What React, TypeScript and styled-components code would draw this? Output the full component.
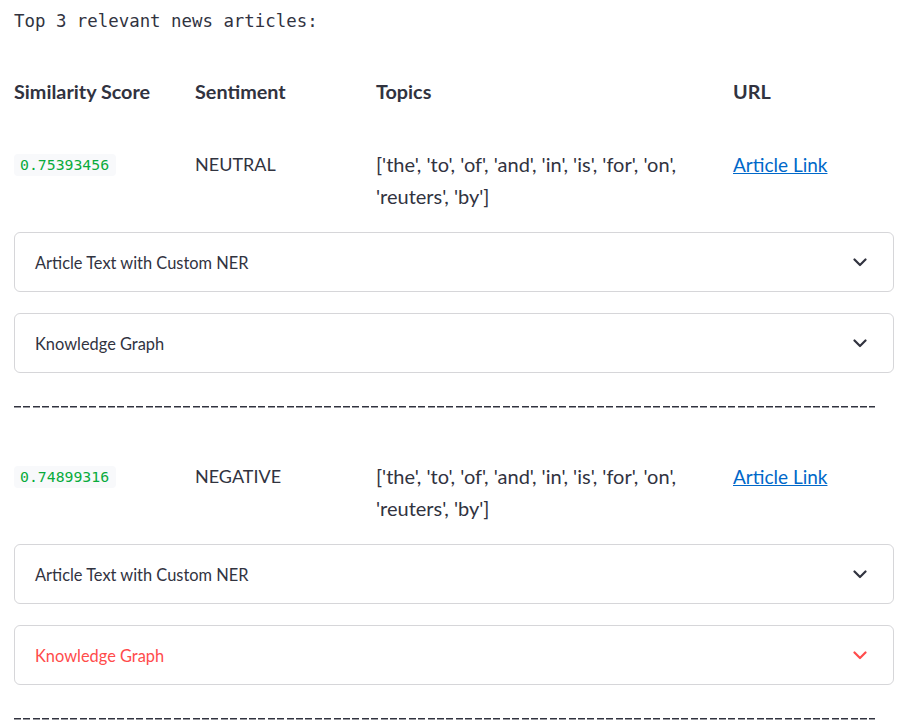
import React from "react";
import styled, { createGlobalStyle } from "styled-components";

const GlobalStyle = createGlobalStyle`
  html, body {
    margin: 0;
    padding: 0;
    background: #ffffff;
  }
  body {
    font-family: Lato, "Liberation Sans", sans-serif;
    color: #31333f;
  }
`;

const Page = styled.div`
  width: 880px;
  padding: 7px 14px 0;
`;

const Intro = styled.div`
  font-family: "DejaVu Sans Mono", "Liberation Mono", monospace;
  font-size: 17.4px;
  line-height: 28px;
  color: #31333f;
  margin-bottom: 40px;
`;

const Grid = styled.div`
  display: grid;
  grid-template-columns: 181px 181px 357px 1fr;
`;

const HeadGrid = styled(Grid)`
  padding-bottom: 2px;
`;

const HeadCell = styled.div`
  font-size: 19.8px;
  font-weight: 700;
  line-height: 32px;
`;

const Cell = styled.div<{ $caps?: boolean }>`
  font-size: ${(p) => (p.$caps ? "18px" : "20px")};
  line-height: 32px;
`;

const Score = styled.code`
  display: inline-block;
  font-family: "DejaVu Sans Mono", "Liberation Mono", monospace;
  font-size: 14.8px;
  line-height: 18px;
  padding: 2px 7px 2px 6px;
  margin-top: 6px;
  color: #09ab3b;
  background: #f8f9fb;
  border-radius: 4px;
`;

const Link = styled.a`
  color: #0068c9;
  font-size: 19px;
  text-decoration: underline;
`;

const Article = styled.div`
  margin-top: 39px;
`;

const Panels = styled.div`
  display: flex;
  flex-direction: column;
  gap: 21px;
  margin-top: 20px;
`;

const Expander = styled.div<{ $active?: boolean }>`
  box-sizing: border-box;
  height: 60px;
  border: 1px solid rgba(49, 51, 63, 0.2);
  border-radius: 6px;
  display: flex;
  align-items: center;
  justify-content: space-between;
  padding: 0 26px 0 20px;
  font-size: 16.4px;
  color: ${(p) => (p.$active ? "#ff4b4b" : "#31333f")};
`;

const Divider = styled.div`
  height: 32px;
  margin-top: 16px;
  width: 861px;
  background: repeating-linear-gradient(
      to right,
      #31333f 0 7px,
      transparent 7px 9.4px
    )
    0 17px / 100% 1.5px no-repeat;
`;

const Chevron = ({ color }: { color: string }) => (
  <svg width="14" height="9" viewBox="0 0 14 9" fill="none">
    <path
      d="M1.5 1.5 L7 7 L12.5 1.5"
      stroke={color}
      strokeWidth="2.2"
      strokeLinecap="round"
      strokeLinejoin="round"
    />
  </svg>
);

type Item = { score: string; sentiment: string; active?: boolean };

const items: Item[] = [
  { score: "0.75393456", sentiment: "NEUTRAL" },
  { score: "0.74899316", sentiment: "NEGATIVE", active: true },
];

const topics = "['the', 'to', 'of', 'and', 'in', 'is', 'for', 'on', 'reuters', 'by']";

export default function App() {
  return (
    <>
      <GlobalStyle />
      <Page>
        <Intro>Top 3 relevant news articles:</Intro>
        <HeadGrid>
          <HeadCell>Similarity Score</HeadCell>
          <HeadCell>Sentiment</HeadCell>
          <HeadCell>Topics</HeadCell>
          <HeadCell>URL</HeadCell>
        </HeadGrid>
        {items.map((it) => (
          <Article key={it.score}>
            <Grid>
              <div>
                <Score>{it.score}</Score>
              </div>
              <Cell $caps>{it.sentiment}</Cell>
              <Cell>{topics}</Cell>
              <Cell>
                <Link href="#">Article Link</Link>
              </Cell>
            </Grid>
            <Panels>
              <Expander>
                Article Text with Custom NER
                <Chevron color="#31333f" />
              </Expander>
              <Expander $active={it.active}>
                Knowledge Graph
                <Chevron color={it.active ? "#ff4b4b" : "#31333f"} />
              </Expander>
            </Panels>
            <Divider />
          </Article>
        ))}
      </Page>
    </>
  );
}
